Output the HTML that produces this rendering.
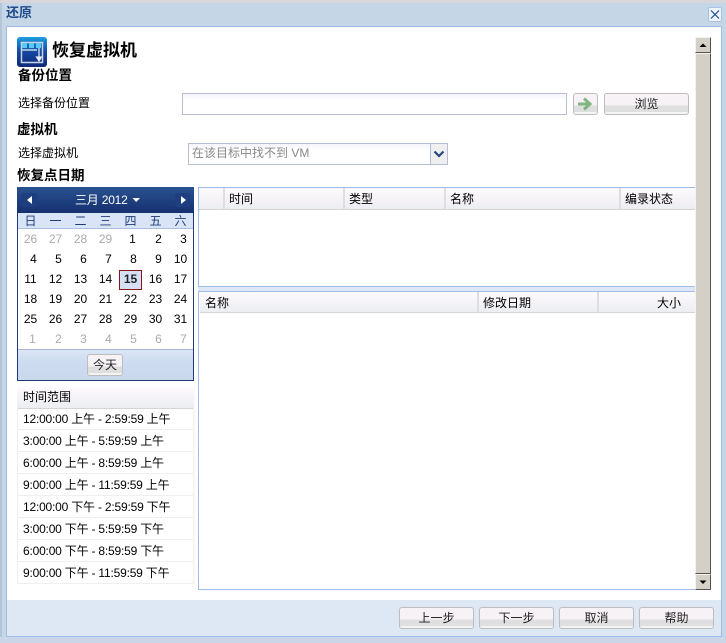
<!DOCTYPE html>
<html><head><meta charset="utf-8">
<style>
html,body{margin:0;padding:0}
body{width:726px;height:643px;overflow:hidden;position:relative;background:#c5d6e6;font:12px "Liberation Sans","WenQuanYi Zen Hei","Noto Sans CJK SC",sans-serif;color:#000}
.a{position:absolute;box-sizing:border-box}
.t{position:absolute;white-space:nowrap;line-height:14px}
.b{font-weight:bold}
.btn{position:absolute;box-sizing:border-box;border:1px solid #bdbdbd;border-radius:3px;background:linear-gradient(#f6f2f6 0,#f6f2f6 58%,#dfdfdf 58%,#dfdfdf 90%,#f4f4f4 90%);text-align:center;color:#222;line-height:21px;height:22px}
.hd{position:absolute;box-sizing:border-box;background:linear-gradient(#fefafe 0,#f7f4f8 45%,#eceef2 100%);border-bottom:1px solid #d4d4d4;border-right:2px solid #dedede;line-height:22px;height:22px;padding-left:4px;white-space:nowrap}
.c{position:absolute;width:25px;text-align:center;line-height:14px}
.g{color:#aaa}
.tr{position:absolute;left:17px;width:177px;height:22px;box-sizing:border-box;border:1px solid #efefef;border-top:0;padding-left:5px;line-height:23px;white-space:nowrap;letter-spacing:-.2px}
.sb{position:absolute;box-sizing:border-box;background:#d4d0c8;border:1px solid;border-color:#f4f3f0 #55534f #55534f #f4f3f0}
</style></head><body>
<div class="a" style="left:0;top:0;width:726px;height:3px;background:#d8d6da"></div>
<div class="a" style="left:0;top:3px;width:2px;height:640px;background:#b4c4d8"></div>
<div class="a" style="left:0;top:637px;width:726px;height:6px;background:#cbd7e8"></div>
<div class="t b" style="left:6px;top:6px;color:#1f4a8c;font-size:13px">还原</div>
<div class="a" style="left:708px;top:7px;width:14px;height:15px;background:#eef3fb;border:1px solid #a9c2ea;border-radius:2px"><svg width="12" height="13" style="display:block"><path d="M2 2.500L10 10.500M10 2.500L2 10.500" stroke="#1f4a8c" stroke-width="1.200"/></svg></div>

<div class="a" style="left:6px;top:26px;width:716px;height:611px;background:#fff;border:1px solid #9fbde9"></div>
<div class="a" style="left:7px;top:600px;width:714px;height:36px;background:#dde8f4"></div>

<svg class="a" style="left:17px;top:37px" width="30" height="30" viewBox="0 0 30 30">
<defs><linearGradient id="ig" x1="0" y1="0" x2="0" y2="1"><stop offset="0" stop-color="#1a9fe0"/><stop offset=".5" stop-color="#14479f"/><stop offset="1" stop-color="#10287c"/></linearGradient></defs>
<rect width="30" height="30" rx="3" fill="url(#ig)"/>
<rect x="4.500" y="5.500" width="21" height="20" fill="none" stroke="#c8d4e6" stroke-width="1.500"/>
<rect x="5" y="6" width="5" height="5" fill="#5cc8f5"/><rect x="12" y="6" width="5" height="5" fill="#5cc8f5"/><rect x="19" y="6" width="5" height="5" fill="#5cc8f5"/>
<path d="M4 13H20" stroke="#c8d4e6" stroke-width="1.500"/>
<path d="M22 11V20M19.500 20H24.500L22 24Z" stroke="#e6ecf4" stroke-width="1.200" fill="#e6ecf4"/>
</svg>
<div class="t b" style="left:52px;top:42px;font-size:17px;line-height:18px">恢复虚拟机</div>
<div class="t b" style="left:18px;top:69px;font-size:13.500px">备份位置</div>
<div class="t" style="left:18px;top:96px">选择备份位置</div>
<div class="a" style="left:182px;top:93px;width:385px;height:22px;background:linear-gradient(#f4f4fa,#fff 30%);border:1px solid #b7bdd8"></div>
<div class="btn" style="left:573px;top:93px;width:25px"><svg width="23" height="20" style="display:block"><path d="M4 10H15M10 4.500L16 10L10 15.500" fill="none" stroke="#82b582" stroke-width="3"/></svg></div>
<div class="btn" style="left:604px;top:93px;width:85px">浏览</div>
<div class="t b" style="left:17px;top:123px;font-size:13.500px">虚拟机</div>
<div class="t" style="left:18px;top:146px">选择虚拟机</div>
<div class="a" style="left:188px;top:143px;width:260px;height:22px;background:linear-gradient(#f4f4fa,#fff 30%);border:1px solid #b7bdd8;color:#888;line-height:19px;padding-left:3px">在该目标中找不到 VM</div>
<div class="a" style="left:430px;top:144px;width:17px;height:20px;background:#efefef;border-left:1px solid #b7bdd8"><svg width="16" height="20" style="display:block"><path d="M3.500 7.500L8 12L12.500 7.500" fill="none" stroke="#26477f" stroke-width="2.200"/></svg></div>
<div class="t b" style="left:17px;top:169px;font-size:13.500px">恢复点日期</div>

<!-- calendar -->
<div class="a" style="left:17px;top:187px;width:177px;height:194px;background:#fff;border:1px solid #1f3a78"></div>
<div class="a" style="left:17px;top:187px;width:177px;height:26px;background:linear-gradient(#2a5290,#15306f)"></div>
<div class="a" style="left:22px;top:193px;width:15px;height:14px;background:#1d3f80;border-radius:2px"><svg width="15" height="14" style="display:block"><path d="M10 3V11L5 7Z" fill="#fff"/></svg></div>
<div class="a" style="left:175px;top:193px;width:15px;height:14px;background:#1d3f80;border-radius:2px"><svg width="15" height="14" style="display:block"><path d="M6 3V11L11 7Z" fill="#fff"/></svg></div>
<div class="t" style="left:75px;top:193px;color:#fff;letter-spacing:-.2px">三月 2012</div>
<svg class="a" style="left:132px;top:197px" width="9" height="6"><path d="M0.500 1H8L4.200 5Z" fill="#fff"/></svg>
<div class="a" style="left:18px;top:213px;width:175px;height:16px;background:#d9e5f6;border-bottom:1px solid #a8bfe2"></div>
<div class="c" style="left:18px;top:214px;color:#1f3a78">日</div><div class="c" style="left:43px;top:214px;color:#1f3a78">一</div><div class="c" style="left:68px;top:214px;color:#1f3a78">二</div><div class="c" style="left:93px;top:214px;color:#1f3a78">三</div><div class="c" style="left:118px;top:214px;color:#1f3a78">四</div><div class="c" style="left:143px;top:214px;color:#1f3a78">五</div><div class="c" style="left:168px;top:214px;color:#1f3a78">六</div>

<div class="c g" style="left:18px;top:232px">26</div><div class="c g" style="left:43px;top:232px">27</div><div class="c g" style="left:68px;top:232px">28</div><div class="c g" style="left:93px;top:232px">29</div><div class="c" style="left:120px;top:232px">1</div><div class="c" style="left:146px;top:232px">2</div><div class="c" style="left:171px;top:232px">3</div>
<div class="c" style="left:21px;top:252px">4</div><div class="c" style="left:46px;top:252px">5</div><div class="c" style="left:71px;top:252px">6</div><div class="c" style="left:96px;top:252px">7</div><div class="c" style="left:121px;top:252px">8</div><div class="c" style="left:146px;top:252px">9</div><div class="c" style="left:168px;top:252px">10</div>
<div class="a" style="left:119px;top:270px;width:23px;height:20px;background:#d5e0f5;border:1px solid #8a1414"></div>
<div class="c" style="left:18px;top:272px">11</div><div class="c" style="left:43px;top:272px">12</div><div class="c" style="left:68px;top:272px">13</div><div class="c" style="left:93px;top:272px">14</div><div class="c b" style="left:118px;top:272px;color:#222">15</div><div class="c" style="left:143px;top:272px">16</div><div class="c" style="left:168px;top:272px">17</div>
<div class="c" style="left:18px;top:292px">18</div><div class="c" style="left:43px;top:292px">19</div><div class="c" style="left:68px;top:292px">20</div><div class="c" style="left:93px;top:292px">21</div><div class="c" style="left:118px;top:292px">22</div><div class="c" style="left:143px;top:292px">23</div><div class="c" style="left:168px;top:292px">24</div>
<div class="c" style="left:18px;top:312px">25</div><div class="c" style="left:43px;top:312px">26</div><div class="c" style="left:68px;top:312px">27</div><div class="c" style="left:93px;top:312px">28</div><div class="c" style="left:118px;top:312px">29</div><div class="c" style="left:143px;top:312px">30</div><div class="c" style="left:168px;top:312px">31</div>
<div class="c g" style="left:20px;top:332px">1</div><div class="c g" style="left:46px;top:332px">2</div><div class="c g" style="left:71px;top:332px">3</div><div class="c g" style="left:96px;top:332px">4</div><div class="c g" style="left:121px;top:332px">5</div><div class="c g" style="left:146px;top:332px">6</div><div class="c g" style="left:171px;top:332px">7</div>
<div class="a" style="left:18px;top:349px;width:175px;height:31px;background:linear-gradient(#dbe6f7,#cddcf0 40%,#c9d8ec);border-top:1px solid #a8b8d4"></div>
<div class="btn" style="left:87px;top:354px;width:36px">今天</div>

<!-- time ranges -->
<div class="hd" style="left:17px;top:387px;width:177px;border-right:0;padding-left:6px;line-height:21px">时间范围</div>
<div class="tr" style="top:408px">12:00:00 上午 - 2:59:59 上午</div>
<div class="tr" style="top:430px">3:00:00 上午 - 5:59:59 上午</div>
<div class="tr" style="top:452px">6:00:00 上午 - 8:59:59 上午</div>
<div class="tr" style="top:474px">9:00:00 上午 - 11:59:59 上午</div>
<div class="tr" style="top:496px">12:00:00 下午 - 2:59:59 下午</div>
<div class="tr" style="top:518px">3:00:00 下午 - 5:59:59 下午</div>
<div class="tr" style="top:540px">6:00:00 下午 - 8:59:59 下午</div>
<div class="tr" style="top:562px">9:00:00 下午 - 11:59:59 下午</div>

<!-- tables -->
<div class="a" style="left:198px;top:187px;width:1px;height:403px;background:#9fbde9"></div>
<div class="a" style="left:198px;top:187px;width:497px;height:1px;background:#9fbde9"></div>
<div class="hd" style="left:199px;top:188px;width:26px"></div>
<div class="hd" style="left:225px;top:188px;width:120px">时间</div>
<div class="hd" style="left:345px;top:188px;width:101px">类型</div>
<div class="hd" style="left:446px;top:188px;width:175px">名称</div>
<div class="hd" style="left:621px;top:188px;width:74px;border-right:0">编录状态</div>
<div class="a" style="left:198px;top:286px;width:497px;height:6px;background:#dde8f4;border-top:1px solid #9fbde9;border-bottom:1px solid #9fbde9"></div>
<div class="hd" style="left:200px;top:292px;width:279px;height:21px;line-height:22px;padding-left:5px">名称</div>
<div class="hd" style="left:479px;top:292px;width:120px;height:21px;line-height:22px">修改日期</div>
<div class="hd" style="left:599px;top:292px;width:96px;height:21px;line-height:22px;border-right:0;text-align:right;padding-right:14px">大小</div>
<div class="a" style="left:198px;top:589px;width:497px;height:1px;background:#9fbde9"></div>

<!-- scrollbar -->
<div class="sb" style="left:695px;top:37px;width:16px;height:16px"><svg width="14" height="14" style="display:block"><path d="M3.500 9H10.500L7 5.500Z" fill="#000"/></svg></div>
<div class="sb" style="left:695px;top:53px;width:16px;height:521px;border-top:1px solid #f4f3f0"></div>
<div class="sb" style="left:695px;top:574px;width:16px;height:16px"><svg width="14" height="14" style="display:block"><path d="M3.500 5.500H10.500L7 9Z" fill="#000"/></svg></div>

<!-- footer buttons -->
<div class="btn" style="left:399px;top:607px;width:75px">上一步</div>
<div class="btn" style="left:479px;top:607px;width:75px">下一步</div>
<div class="btn" style="left:559px;top:607px;width:75px">取消</div>
<div class="btn" style="left:639px;top:607px;width:75px">帮助</div>
</body></html>
